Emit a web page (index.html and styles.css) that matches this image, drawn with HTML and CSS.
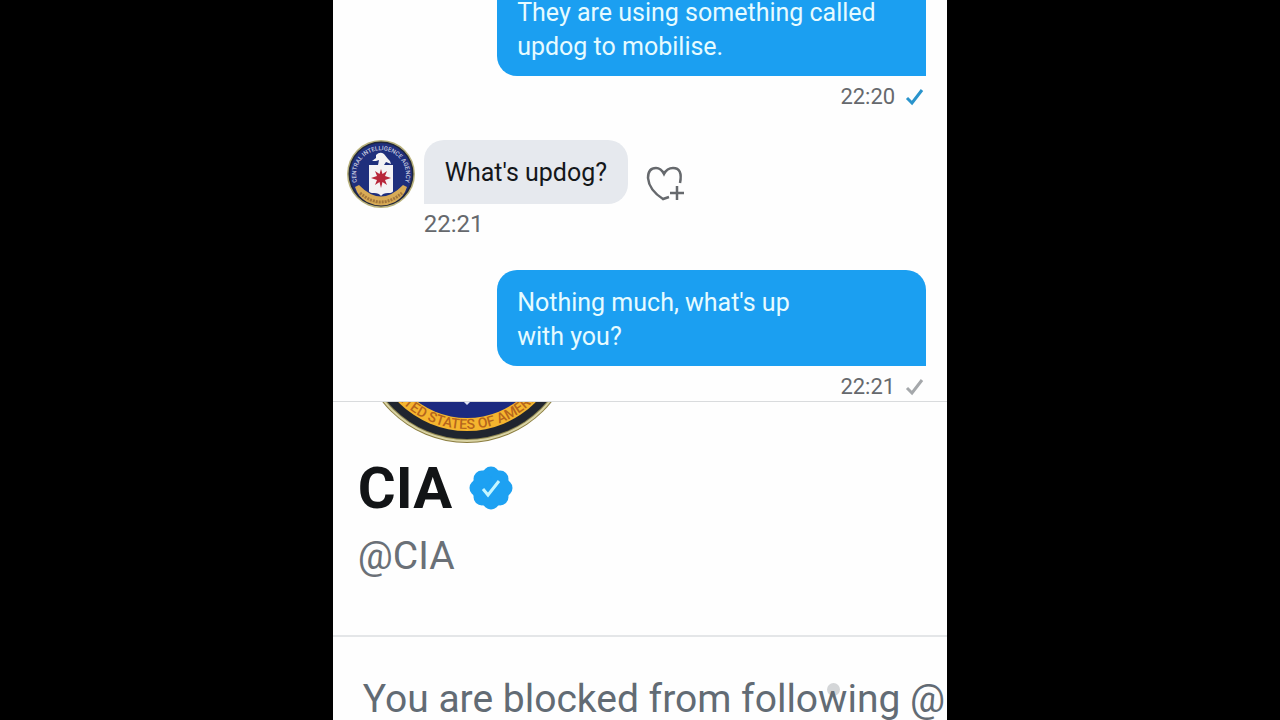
FILE: index.html
```
<!DOCTYPE html>
<html lang="en">
<head>
    <meta charset="UTF-8">
    <meta name="viewport" content="width=device-width, initial-scale=1.0">
    <title>CIA</title>
    <link rel="stylesheet" href="styles.css">
</head>
<body>
    <main class="screen">
        <section class="chat">
            <div class="message sent">
                <p class="bubble">They are using something called updog to mobilise.</p>
                <div class="meta">
                    <time>22:20</time>
                    <svg class="tick read" viewBox="0 0 20 20"><path d="M2 11 L7 16 L17 3"/></svg>
                </div>
            </div>
            <div class="message received">
                <svg class="avatar" viewBox="0 0 68 68" role="img" aria-label="CIA">
                    <defs>
                        <path id="agency-arc" d="M11.5 46 A25 25 0 1 1 56.5 46"/>
                    </defs>
                    <circle cx="34" cy="34" r="34" fill="#b9b27c"/>
                    <circle cx="34" cy="34" r="32.5" fill="#20263a"/>
                    <circle cx="34" cy="34" r="31" fill="#1f2f7c"/>
                    <text class="avatar-text"><textPath href="#agency-arc" startOffset="50%">CENTRAL INTELLIGENCE AGENCY</textPath></text>
                    <path d="M8 47 L12 45 Q34 68 56 45 L60 47 Q57 57 48 62 Q34 69 20 62 Q11 57 8 47 Z" fill="#d8ab55"/>
                    <path d="M13 53 Q34 71 55 53" fill="none" stroke="#a3763c" stroke-width="3" stroke-dasharray="2 1"/>
                    <path d="M22 25 H46 V51 Q46 53 41 53 Q36 53 34 56 Q32 53 27 53 Q22 53 22 51 Z" fill="#f4f3f5"/>
                    <path d="M25 21 L29 18 L29 15 Q33 11 37 14 L41 19 Q44 21 44 24 L39 22 L37 25 H31 L32 20 L29 21 Z" fill="#f4f3f5"/>
                    <path d="M34 29 L35.5 34 L40 31 L38 36 L44 38 L38 40 L40 45 L35.5 42 L34 48 L32.5 42 L28 45 L30 40 L24 38 L30 36 L28 31 L32.5 34 Z" fill="#b8263a"/>
                </svg>
                <div class="message-body">
                    <div class="bubble-row">
                        <p class="bubble">What's updog?</p>
                        <button class="react" type="button" aria-label="Add reaction">
                            <svg viewBox="0 0 40 36"><path d="M34 17 Q37 2 27 2 Q21 2 18 8 Q15 2 10 2 Q2 2 2 12 Q3 24 17 33 L23 31 M31 20 V34 M24 27 H38"/></svg>
                        </button>
                    </div>
                    <time>22:21</time>
                </div>
            </div>
            <div class="message sent">
                <p class="bubble">Nothing much, what's up with&nbsp;you?</p>
                <div class="meta">
                    <time>22:21</time>
                    <svg class="tick" viewBox="0 0 20 20"><path d="M2 11 L7 16 L17 3"/></svg>
                </div>
            </div>
        </section>

        <section class="profile">
            <!-- only the lower edge of the seal is in view -->
            <svg class="seal" viewBox="0 176 218 42" role="img" aria-label="United States of America">
                <defs>
                    <path id="states-arc" d="M15 109 A94 94 0 0 0 203 109"/>
                </defs>
                <circle cx="109" cy="109" r="108" fill="#8a7c3f"/>
                <circle cx="109" cy="109" r="107" fill="#d9d3a4"/>
                <circle cx="109" cy="109" r="105" fill="#8f8750"/>
                <circle cx="109" cy="109" r="104" fill="#20252f"/>
                <circle cx="109" cy="109" r="96" fill="#f5b52e"/>
                <circle cx="109" cy="109" r="83" fill="#1c2a80"/>
                <text class="seal-text"><textPath href="#states-arc" startOffset="50%">UNITED STATES OF AMERICA</textPath></text>
                <path d="M106 176 H112 L109 179 Z" fill="#dfe4f5"/>
            </svg>
            <div class="name-row">
                <h1>CIA</h1>
                <svg class="verified" viewBox="0 0 44 44" role="img" aria-label="Verified">
                    <g fill="#1da1f2">
                        <circle cx="22" cy="22" r="19"/>
                        <circle cx="22" cy="9" r="8.5"/>
                        <circle cx="31" cy="13" r="8.5"/>
                        <circle cx="35" cy="22" r="8.5"/>
                        <circle cx="31" cy="31" r="8.5"/>
                        <circle cx="22" cy="35" r="8.5"/>
                        <circle cx="13" cy="31" r="8.5"/>
                        <circle cx="9" cy="22" r="8.5"/>
                        <circle cx="13" cy="13" r="8.5"/>
                    </g>
                    <path d="M14 23 L19 29 L30 15" fill="none" stroke="#c4f6ff" stroke-width="3"/>
                </svg>
            </div>
            <p class="handle">@CIA</p>
        </section>

        <section class="notice">
            <span class="touch"></span>
            <p>You are blocked from following @</p>
        </section>
    </main>
</body>
</html>
```
FILE: styles.css
```
* {
    box-sizing: border-box;
}
body {
    margin: 0;
    height: 100vh;
    overflow: hidden;
    background: #000;
    font-family: Roboto, Arial, sans-serif;
}
p, h1 {
    margin: 0;
}
.screen {
    width: 48%;
    min-height: 100vh;
    margin: 0 auto;
    background: #fefefe;
    overflow: hidden;
}
.chat {
    margin-top: -20px;
    padding: 0 21px 0 14px;
    border-bottom: 1px solid #d9dbdd;
}
.message {
    display: flex;
}
.sent {
    flex-direction: column;
    align-items: flex-end;
}
.bubble {
    padding: 16px 20px 12px;
    font-size: 25px;
    line-height: 34px;
}
.sent .bubble {
    width: 429px;
    max-width: 100%;
    padding-right: 40px;
    background: #1b9ff1;
    color: #e6fbff;
    border-radius: 20px 20px 0 20px;
}
.meta {
    display: flex;
    align-items: center;
    gap: 10px;
    padding: 7px 1px 0 0;
}
time {
    font-size: 22px;
    line-height: 28px;
    color: #66696d;
}
.tick {
    width: 20px;
    height: 20px;
    fill: none;
    stroke: #a5a8ab;
    stroke-width: 3;
}
.tick.read {
    stroke: #2a94cc;
}
.received {
    gap: 9px;
    margin: 29px 0 30px;
}
.avatar {
    width: 68px;
    height: 68px;
    flex-shrink: 0;
}
.avatar-text {
    font-size: 6px;
    font-weight: 500;
    fill: #c9cde0;
    text-anchor: middle;
}
.received .bubble {
    padding: 16px 21px 14px;
    background: #e6e9ee;
    color: #14171a;
    border-radius: 20px 20px 20px 0;
}
.bubble-row {
    display: flex;
    align-items: center;
    gap: 18px;
}
.received time {
    display: block;
    padding-top: 4px;
    font-size: 24px;
    line-height: 32px;
}
.react {
    width: 40px;
    height: 36px;
    margin-top: 24px;
    padding: 0;
    border: none;
    background: none;
}
.react svg {
    display: block;
    fill: none;
    stroke: #66696d;
    stroke-width: 2.5;
}
.profile {
    padding: 0 25px 53px;
    border-bottom: 2px solid #e4e6e8;
}
.seal {
    display: block;
    width: 218px;
    height: 42px;
}
.seal-text {
    font-size: 14px;
    font-weight: 500;
    fill: #b5651d;
    text-anchor: middle;
}
.name-row {
    display: flex;
    align-items: center;
    gap: 17px;
    margin-top: 10px;
}
h1 {
    font-size: 58px;
    line-height: 68px;
    color: #121416;
}
.verified {
    width: 44px;
    height: 44px;
}
.handle {
    margin-top: 8px;
    font-size: 39px;
    line-height: 52px;
    color: #6a7077;
}
.notice {
    position: relative;
    padding: 34px 0 0 30px;
    font-size: 39px;
    line-height: 56px;
    color: #626b74;
    white-space: nowrap;
}
.touch {
    position: absolute;
    top: 46px;
    left: 494px;
    width: 13px;
    height: 13px;
    border-radius: 50%;
    background: #d4d6d8;
}
.notice p {
    position: relative;
}
```
